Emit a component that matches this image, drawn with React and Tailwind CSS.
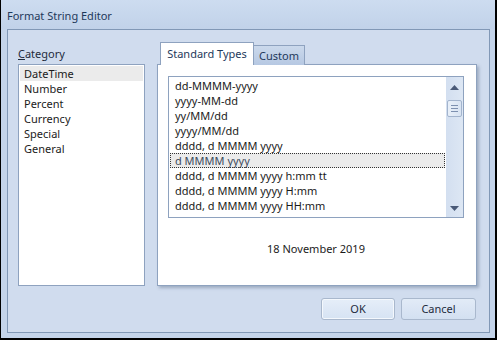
import { useState } from "react"

const categories = ["DateTime", "Number", "Percent", "Currency", "Special", "General"]

const formats = [
    "dd-MMMM-yyyy",
    "yyyy-MM-dd",
    "yy/MM/dd",
    "yyyy/MM/dd",
    "dddd, d MMMM yyyy",
    "d MMMM yyyy",
    "dddd, d MMMM yyyy h:mm tt",
    "dddd, d MMMM yyyy H:mm",
    "dddd, d MMMM yyyy HH:mm",
    "d MMMM yyyy h:mm tt",
]

export default function App() {
    const [category, setCategory] = useState("DateTime")
    const [format, setFormat] = useState("d MMMM yyyy")
    const [tab, setTab] = useState("standard")

    return (
        <div
            className="w-[497px] h-[340px] flex flex-col bg-[#c4d4ea] border-l border-r-2 border-b-2 border-black text-[11px] text-[#1b1b1b] overflow-hidden"
            style={{ fontFamily: '"Noto Sans", "Open Sans", sans-serif' }}
        >
            {/* Title bar */}
            <div className="h-[29px] shrink-0 flex items-center pl-[6px] pt-[3px] text-[11px] text-[#1e395b] bg-gradient-to-b from-[#cddcf0] to-[#c1d2e9]">
                Format String Editor
            </div>

            {/* Client area */}
            <div className="flex-1 ml-[6px] mr-[5px] mb-[5px] border border-[#8198b6] bg-[#d0dcee] flex flex-col pl-[10px] pr-[12px] pt-[12px] pb-[12px]">
                <div className="flex gap-[12px]">
                    {/* Category */}
                    <div className="w-[127px] flex flex-col">
                        <div className="h-[22px] flex items-center pt-[2px] text-[#1e2b3c]">
                            <span className="underline">C</span>ategory
                        </div>
                        <div className="h-[222px] border border-[#8ea2bf] bg-white p-px">
                            {categories.map(c => (
                                <div
                                    key={c}
                                    onClick={() => setCategory(c)}
                                    className={`h-[15px] leading-[15px] pl-[4px] ${category === c ? "bg-[#ebebeb]" : ""}`}
                                >
                                    {c}
                                </div>
                            ))}
                        </div>
                    </div>

                    {/* Tabs */}
                    <div className="w-[320px] flex flex-col">
                        <div className="h-[22px] flex items-end pl-[3px]">
                            <button
                                onClick={() => setTab("standard")}
                                className={`relative z-10 -mb-px w-[94px] border border-b-0 border-[#8ea2bf] text-[#1e395b] ${tab === "standard" ? "h-[23px] bg-white" : "h-[20px] bg-gradient-to-b from-[#cbd9ec] to-[#b6c8e2]"}`}
                            >
                                Standard Types
                            </button>
                            <button
                                onClick={() => setTab("custom")}
                                className={`relative -mb-px w-[51px] pt-[2px] border border-l-0 border-b-0 border-[#8ea2bf] text-[#1e395b] ${tab === "custom" ? "h-[23px] bg-white z-10" : "h-[20px] bg-gradient-to-b from-[#cbd9ec] to-[#b6c8e2]"}`}
                            >
                                Custom
                            </button>
                        </div>
                        <div className="h-[222px] border border-[#8ea2bf] bg-white shadow-[2px_2px_3px_rgba(60,80,110,0.35)] flex flex-col pt-[11px] pl-[10px] pr-[12px]">
                            <div className="h-[142px] border border-[#8ea2bf] flex">
                                <div className="flex-1 pl-px pt-px overflow-hidden">
                                    {formats.map(f => (
                                        <div
                                            key={f}
                                            onClick={() => setFormat(f)}
                                            className={`h-[15px] leading-[15px] pl-[5px] mr-px whitespace-nowrap ${format === f ? "bg-[#ebebeb] outline-1 outline-dotted outline-[#333] -outline-offset-1 text-[#3c4a5c]" : ""}`}
                                        >
                                            {f}
                                        </div>
                                    ))}
                                </div>
                                {/* Scrollbar */}
                                <div className="w-[17px] shrink-0 bg-gradient-to-r from-[#d3dff0] to-[#dde7f4] flex flex-col items-center">
                                    <div className="h-[20px] flex items-center justify-center">
                                        <svg width="9" height="5" viewBox="0 0 9 5"><path d="M4.5 0 L9 5 L0 5 Z" fill="#4a5a78" /></svg>
                                    </div>
                                    <div className="mt-[3px] w-[15px] h-[17px] rounded-[2px] border border-[#a3b4cd] bg-gradient-to-r from-[#e9f0f9] to-[#d8e3f2] flex flex-col items-center justify-center gap-[2px]">
                                        <div className="w-[7px] h-px bg-[#7d90b0]" />
                                        <div className="w-[7px] h-px bg-[#7d90b0]" />
                                        <div className="w-[7px] h-px bg-[#7d90b0]" />
                                    </div>
                                    <div className="flex-1" />
                                    <div className="h-[17px] flex items-center justify-center">
                                        <svg width="9" height="5" viewBox="0 0 9 5"><path d="M0 0 L9 0 L4.5 5 Z" fill="#4a5a78" /></svg>
                                    </div>
                                </div>
                            </div>
                            <div className="flex-1 flex items-center justify-center pb-[4px] text-[#1b1b1b]">
                                18 November 2019
                            </div>
                        </div>
                    </div>
                </div>

                {/* Buttons */}
                <div className="flex-1 flex items-end justify-end gap-[6px] pr-px">
                    <button className="w-[74px] h-[22px] rounded-[3px] border border-[#a9b8cd] bg-gradient-to-b from-[#e6eef9] to-[#d6e3f3] shadow-[inset_0_0_0_1px_#f4f8fd] text-[#1e2b3c]">
                        OK
                    </button>
                    <button className="w-[75px] h-[22px] rounded-[3px] border border-[#a9b8cd] bg-gradient-to-b from-[#e2ebf7] to-[#d3e0f1] text-[#1e2b3c]">
                        Cancel
                    </button>
                </div>
            </div>
        </div>
    )
}
